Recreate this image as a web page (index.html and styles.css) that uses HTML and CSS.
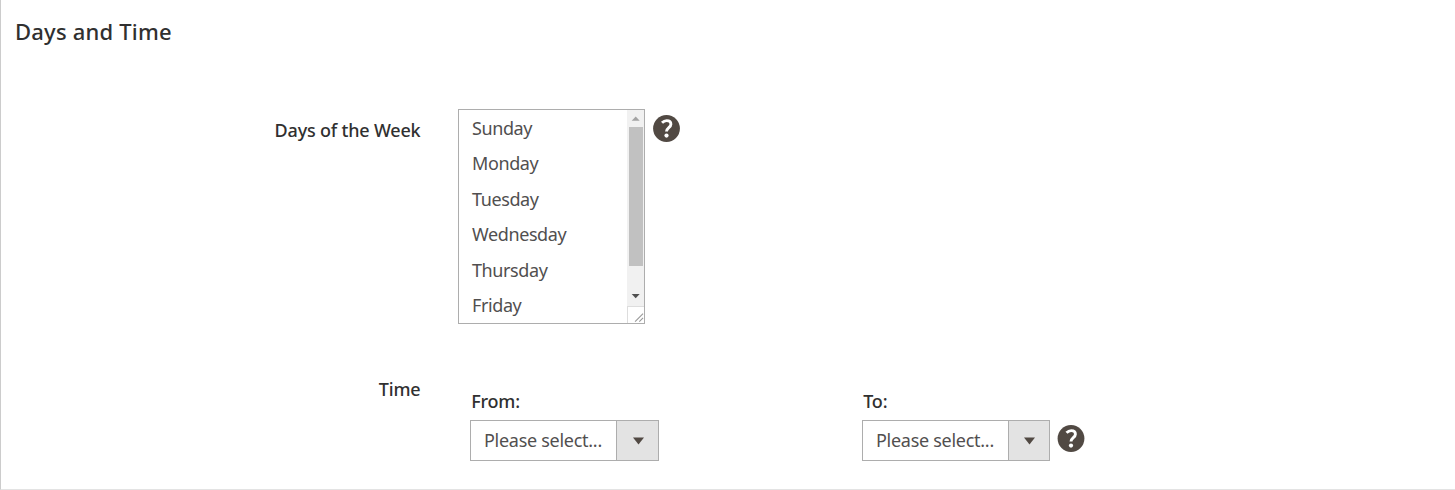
FILE: index.html
```html
<!DOCTYPE html>
<html lang="en">
<head>
<meta charset="utf-8">
<title>Days and Time</title>
<link rel="stylesheet" href="styles.css">
</head>
<body>
<main class="panel">
  <h2 class="title">Days and Time</h2>
  <div class="field days">
    <div class="label"><span class="label-text">Days of the Week</span></div>
    <div class="listbox">
      <ul class="options">
        <li>Sunday</li><li>Monday</li><li>Tuesday</li><li>Wednesday</li><li>Thursday</li><li>Friday</li>
      </ul>
      <div class="scroll">
        <div class="track">
          <svg class="arrow" width="17" height="16" viewBox="0 0 17 16"><path d="M4.700 10.700h8L8.700 6.500z" fill="#a3a3a3"/></svg>
          <div class="thumb"></div>
          <svg class="arrow" width="17" height="16" viewBox="0 0 17 16"><path d="M4.700 6h8l-4 4.200z" fill="#505050"/></svg>
        </div>
        <svg class="grip" width="17" height="17" viewBox="0 0 17 17"><path d="M7.500 15.500l8.500-8.500M12 15.500l4-4" stroke="#999" stroke-width="1.2" fill="none"/></svg>
      </div>
    </div>
    <svg class="help" width="28" height="28" viewBox="0 0 28 28"><circle cx="13.500" cy="13.500" r="13.4" fill="#514943"/><path d="M9 7.800c1.500-1.500 3-2.200 4.700-2.200 2.700 0 4.200 1.300 4.200 3.600 0 3.400-4.400 3.500-4.400 7.400" fill="none" stroke="#fff" stroke-width="2.900"/><circle cx="13.500" cy="20.600" r="2.100" fill="#fff"/></svg>
  </div>
  <div class="field time">
    <div class="label"><span class="label-text">Time</span></div>
    <div class="group from">
      <span class="caption">From:</span>
      <div class="select"><span class="value">Please select...</span><span class="toggle"><svg width="11" height="8" viewBox="0 0 11 8"><path d="M0 .5h11L5.500 7.500z" fill="#514943"/></svg></span></div>
    </div>
    <div class="group to">
      <span class="caption">To:</span>
      <div class="select"><span class="value">Please select...</span><span class="toggle"><svg width="11" height="8" viewBox="0 0 11 8"><path d="M0 .5h11L5.500 7.500z" fill="#514943"/></svg></span></div>
    </div>
    <svg class="help" width="28" height="28" viewBox="0 0 28 28"><circle cx="14" cy="13.500" r="13.4" fill="#514943"/><path d="M9.500 7.800c1.500-1.500 3-2.200 4.700-2.200 2.700 0 4.200 1.300 4.200 3.600 0 3.400-4.400 3.500-4.400 7.400" fill="none" stroke="#fff" stroke-width="2.900"/><circle cx="14" cy="20.600" r="2.100" fill="#fff"/></svg>
  </div>
</main>
</body>
</html>
```
FILE: styles.css
```css
* { box-sizing: border-box; }
body { margin: 0; background: #fff; color: #303030; font: 18px/24px "Noto Sans", "Open Sans", sans-serif; letter-spacing: -0.2px; }
.panel { height: 490px; border-left: 1px solid #ccc; border-bottom: 1px solid #e3e3e3; overflow: hidden; }
.title { margin: 16px 0 0 14px; font-size: 22px; line-height: 30px; font-weight: 500; letter-spacing: 0.2px; }
.field { display: flex; align-items: flex-start; }
.days { margin-top: 63px; height: 215px; }
.label { width: 420px; padding-right: 0.6px; text-align: right; font-weight: 500; white-space: nowrap; }
.days .label { padding-top: 9px; }
.listbox { display: flex; width: 187px; height: 215px; margin-left: 37px; border: 1px solid #adadad; overflow: hidden; }
.options { flex: 1; margin: 0; padding: 1px 0 0 13px; list-style: none; color: #514f4f; letter-spacing: -0.4px; }
.options li { height: 35.4px; line-height: 35.4px; }
.scroll { width: 17px; }
.track { height: 196px; background: #f1f1f1; }
.arrow, .grip { display: block; }
.thumb { height: 139px; margin: 1px 1px 22px 2px; background: #c1c1c1; }
.grip { border-top: 1px solid #ddd; border-left: 1px solid #ddd; }
.help { flex: none; }
.days .help { margin: 6px 0 0 8px; }
.time { margin-top: 53px; }
.time .group { margin-top: 12px; }
.from { margin-left: 49px; }
.to { margin-left: 203px; }
.caption { display: block; margin-left: 1.2px; font-weight: 500; }
.select { display: flex; width: 189px; height: 41px; margin-top: 7px; border: 1px solid #adadad; color: #514f4f; letter-spacing: -0.28px; }
.to .select { width: 188px; }
.value { flex: 1; padding-left: 13px; line-height: 39px; white-space: nowrap; }
.toggle { display: flex; align-items: center; justify-content: center; width: 42px; padding: 1px 0 0 1px; border-left: 1px solid #adadad; background: #e3e3e3; }
.to .toggle { width: 41px; padding-left: 0; }
.time .help { margin: 48px 0 0 7px; }
```
